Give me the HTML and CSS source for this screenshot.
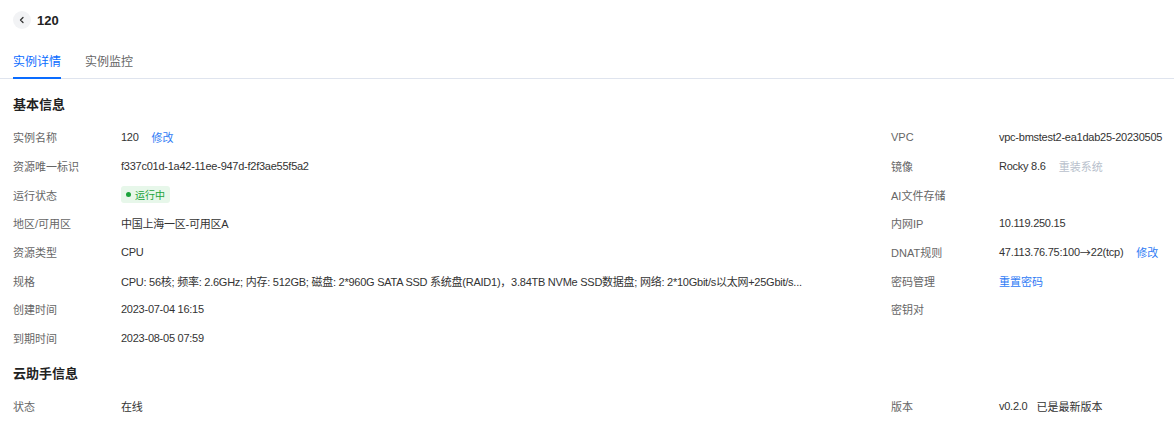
FILE: index.html
```html
<!DOCTYPE html>
<html lang="zh-CN">
<head>
<meta charset="utf-8">
<link rel="stylesheet" href="styles.css">
</head>
<body>
<div class="header">
  <span class="back">
    <svg width="8" height="8" viewBox="0 0 8 8"><path d="M5 1.5 L2.5 4 L5 6.5" fill="none" stroke="#333" stroke-width="1.3" stroke-linecap="round" stroke-linejoin="round"/></svg>
  </span>
  <span class="title">120</span>
</div>
<div class="tabs">
  <span class="tab active">实例详情</span>
  <span class="tab">实例监控</span>
</div>

<div class="section">
  <div class="section-title">基本信息</div>
  <div class="info-grid">
    <div class="col left">
      <div class="row"><span class="label">实例名称</span><span class="value">120<a class="link">修改</a></span></div>
      <div class="row"><span class="label">资源唯一标识</span><span class="value">f337c01d-1a42-11ee-947d-f2f3ae55f5a2</span></div>
      <div class="row"><span class="label">运行状态</span><span class="value"><span class="badge"><i class="dot"></i>运行中</span></span></div>
      <div class="row"><span class="label">地区/可用区</span><span class="value">中国上海一区-可用区A</span></div>
      <div class="row"><span class="label">资源类型</span><span class="value">CPU</span></div>
      <div class="row"><span class="label">规格</span><span class="value">CPU: 56核; 频率: 2.6GHz; 内存: 512GB; 磁盘: 2*960G SATA SSD 系统盘(RAID1)，3.84TB NVMe SSD数据盘; 网络: 2*10Gbit/s以太网+25Gbit/s...</span></div>
      <div class="row"><span class="label">创建时间</span><span class="value">2023-07-04 16:15</span></div>
      <div class="row"><span class="label">到期时间</span><span class="value">2023-08-05 07:59</span></div>
    </div>
    <div class="col right">
      <div class="row"><span class="label">VPC</span><span class="value">vpc-bmstest2-ea1dab25-20230505</span></div>
      <div class="row"><span class="label">镜像</span><span class="value">Rocky 8.6<a class="link disabled">重装系统</a></span></div>
      <div class="row"><span class="label">AI文件存储</span><span class="value"></span></div>
      <div class="row"><span class="label">内网IP</span><span class="value">10.119.250.15</span></div>
      <div class="row"><span class="label">DNAT规则</span><span class="value">47.113.76.75:100<span class="arrow">→</span>22(tcp)<a class="link">修改</a></span></div>
      <div class="row"><span class="label">密码管理</span><span class="value"><a class="link first">重置密码</a></span></div>
      <div class="row"><span class="label">密钥对</span><span class="value"></span></div>
    </div>
  </div>
</div>

<div class="section second">
  <div class="section-title">云助手信息</div>
  <div class="info-grid">
    <div class="col left">
      <div class="row"><span class="label">状态</span><span class="value">在线</span></div>
    </div>
    <div class="col right">
      <div class="row"><span class="label">版本</span><span class="value">v0.2.0<span class="note">已是最新版本</span></span></div>
    </div>
  </div>
</div>
</body>
</html>
```

FILE: styles.css
```css
* { box-sizing: border-box; }
body {
  margin: 0;
  background: #fff;
  font-family: "Liberation Sans", "Noto Sans CJK SC", sans-serif;
  font-size: 11px;
  color: #333;
}
.header {
  height: 40px;
  display: flex;
  align-items: center;
  padding: 0 13px;
  gap: 6px;
}
.back {
  width: 18px;
  height: 18px;
  border-radius: 50%;
  background: #f2f3f5;
  display: flex;
  align-items: center;
  justify-content: center;
}
.title {
  font-size: 13px;
  font-weight: bold;
  color: #222;
}
.tabs {
  display: flex;
  gap: 24px;
  padding: 0 13px;
  border-bottom: 1px solid #dfe4ee;
}
.tab {
  font-size: 12px;
  line-height: 17px;
  padding: 14px 0 6px;
  border-bottom: 2px solid transparent;
  margin-bottom: -1px;
  color: #666;
}
.tab.active {
  color: #0a6cff;
  border-bottom-color: #0a6cff;
}
.section {
  padding: 0 13px;
}
.section-title {
  font-size: 13px;
  font-weight: bold;
  color: #222;
  line-height: 20px;
  margin-top: 16px;
  margin-bottom: 8px;
}
.section.second .section-title {
  margin-top: 11px;
}
.info-grid {
  display: grid;
  grid-template-columns: 878px 1fr;
}
.row {
  height: 28.7px;
  display: flex;
  align-items: center;
  white-space: nowrap;
}
.label {
  width: 108px;
  flex: none;
  color: #666;
}
.value {
  color: #333;
  display: flex;
  align-items: center;
  letter-spacing: -0.25px;
}
.arrow {
  font-family: "Noto Sans CJK SC", sans-serif;
  letter-spacing: 0;
}
.link {
  color: #2f7bf5;
  margin-left: 13px;
  letter-spacing: 0;
  cursor: pointer;
}
.link.first { margin-left: 0; }
.link.disabled { color: #b8bfcc; }
.note { margin-left: 9px; letter-spacing: 0; }
.badge {
  display: inline-flex;
  align-items: center;
  height: 17px;
  padding: 0 5px;
  border-radius: 3px;
  background: #e7f7ea;
  color: #1aa33a;
  font-size: 10px;
  letter-spacing: 0;
  gap: 4px;
}
.dot {
  width: 5px;
  height: 5px;
  border-radius: 50%;
  background: #1aa33a;
}
```
